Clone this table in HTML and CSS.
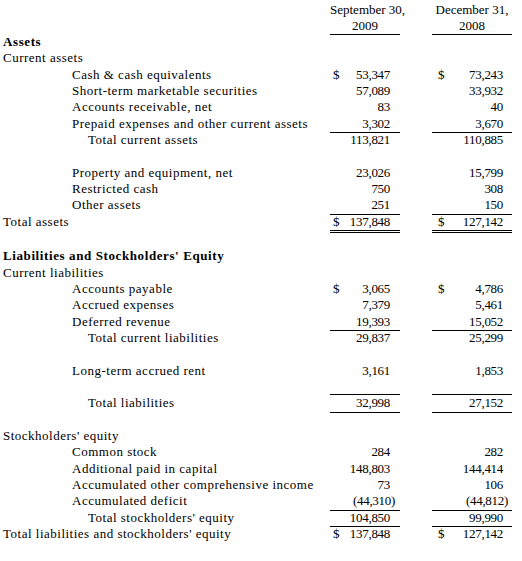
FILE: index.html
```html
<!DOCTYPE html>
<html lang="en">

<head>
    <meta charset="UTF-8">
    <title>Balance Sheet</title>
    <link rel="stylesheet" href="styles.css">
</head>

<body>
    <div class="sheet">
        <!-- Column headings -->
        <div class="row head">
            <span class="label"></span>
            <span class="col1 date">September 30,<br>2009</span>
            <span class="col2 date">December 31,<br>2008</span>
        </div>

        <!-- Assets -->
        <div class="row"><span class="label bold">Assets</span></div>
        <div class="row"><span class="label">Current assets</span></div>
        <div class="row">
            <span class="label l1">Cash &amp; cash equivalents</span>
            <span class="col1 amt"><span class="cur">$</span>53,347</span>
            <span class="col2 amt"><span class="cur">$</span>73,243</span>
        </div>
        <div class="row">
            <span class="label l1">Short-term marketable securities</span>
            <span class="col1 amt">57,089</span>
            <span class="col2 amt">33,932</span>
        </div>
        <div class="row">
            <span class="label l1">Accounts receivable, net</span>
            <span class="col1 amt">83</span>
            <span class="col2 amt">40</span>
        </div>
        <div class="row">
            <span class="label l1">Prepaid expenses and other current assets</span>
            <span class="col1 amt line">3,302</span>
            <span class="col2 amt line">3,670</span>
        </div>
        <div class="row">
            <span class="label l2">Total current assets</span>
            <span class="col1 amt">113,821</span>
            <span class="col2 amt">110,885</span>
        </div>
        <div class="row"></div>
        <div class="row">
            <span class="label l1">Property and equipment, net</span>
            <span class="col1 amt">23,026</span>
            <span class="col2 amt">15,799</span>
        </div>
        <div class="row">
            <span class="label l1">Restricted cash</span>
            <span class="col1 amt">750</span>
            <span class="col2 amt">308</span>
        </div>
        <div class="row">
            <span class="label l1">Other assets</span>
            <span class="col1 amt line">251</span>
            <span class="col2 amt line">150</span>
        </div>
        <div class="row">
            <span class="label">Total assets</span>
            <span class="col1 amt double"><span class="cur">$</span>137,848</span>
            <span class="col2 amt double"><span class="cur">$</span>127,142</span>
        </div>
        <div class="row after-double"></div>

        <!-- Liabilities -->
        <div class="row"><span class="label bold">Liabilities and Stockholders' Equity</span></div>
        <div class="row"><span class="label">Current liabilities</span></div>
        <div class="row">
            <span class="label l1">Accounts payable</span>
            <span class="col1 amt"><span class="cur">$</span>3,065</span>
            <span class="col2 amt"><span class="cur">$</span>4,786</span>
        </div>
        <div class="row">
            <span class="label l1">Accrued expenses</span>
            <span class="col1 amt">7,379</span>
            <span class="col2 amt">5,461</span>
        </div>
        <div class="row">
            <span class="label l1">Deferred revenue</span>
            <span class="col1 amt line">19,393</span>
            <span class="col2 amt line">15,052</span>
        </div>
        <div class="row">
            <span class="label l2">Total current liabilities</span>
            <span class="col1 amt">29,837</span>
            <span class="col2 amt">25,299</span>
        </div>
        <div class="row"></div>
        <div class="row">
            <span class="label l1">Long-term accrued rent</span>
            <span class="col1 amt">3,161</span>
            <span class="col2 amt">1,853</span>
        </div>
        <div class="row">
            <span class="label"></span>
            <span class="col1 amt line"></span>
            <span class="col2 amt line"></span>
        </div>
        <div class="row">
            <span class="label l2">Total liabilities</span>
            <span class="col1 amt line">32,998</span>
            <span class="col2 amt line">27,152</span>
        </div>
        <div class="row"></div>

        <!-- Equity -->
        <div class="row"><span class="label">Stockholders' equity</span></div>
        <div class="row">
            <span class="label l1">Common stock</span>
            <span class="col1 amt">284</span>
            <span class="col2 amt">282</span>
        </div>
        <div class="row">
            <span class="label l1">Additional paid in capital</span>
            <span class="col1 amt">148,803</span>
            <span class="col2 amt">144,414</span>
        </div>
        <div class="row">
            <span class="label l1">Accumulated other comprehensive income</span>
            <span class="col1 amt">73</span>
            <span class="col2 amt">106</span>
        </div>
        <div class="row">
            <span class="label l1">Accumulated deficit</span>
            <span class="col1 amt line neg">(44,310)</span>
            <span class="col2 amt line neg">(44,812)</span>
        </div>
        <div class="row">
            <span class="label l2">Total stockholders' equity</span>
            <span class="col1 amt line">104,850</span>
            <span class="col2 amt line">99,990</span>
        </div>
        <div class="row">
            <span class="label">Total liabilities and stockholders' equity</span>
            <span class="col1 amt double"><span class="cur">$</span>137,848</span>
            <span class="col2 amt double"><span class="cur">$</span>127,142</span>
        </div>
    </div>
</body>

</html>
```

FILE: styles.css
```css
body {
    margin: 0;
    background: #fff;
    color: #000;
    font-family: "Liberation Serif", "Times New Roman", serif;
    font-size: 13px;
}

.sheet {
    width: 522px;
}

.row {
    display: grid;
    grid-template-columns: 330px 70px 32px 80px;
    height: 16.33px;
    line-height: 16.33px;
}

.head {
    height: 32px;
    line-height: 16px;
    margin-top: 2px;
}

.label {
    grid-column: 1;
    padding-left: 3px;
    white-space: nowrap;
    letter-spacing: 0.5px;
}

.label.l1 {
    padding-left: 72px;
}

.label.l2 {
    padding-left: 88px;
}

.bold {
    font-weight: bold;
    letter-spacing: 0.6px;
}

.col1 {
    grid-column: 2;
}

.col2 {
    grid-column: 4;
}

.date {
    text-align: center;
    border-bottom: 1px solid #000;
    box-sizing: border-box;
    white-space: nowrap;
}

.amt {
    text-align: right;
    padding-right: 10px;
    box-sizing: border-box;
    letter-spacing: -0.3px;
}

.col2.amt {
    padding-right: 9px;
}

.cur {
    float: left;
    padding-left: 3px;
}

.col2 .cur {
    padding-left: 6px;
}

.amt.neg {
    padding-right: 5px;
}

.col2.amt.neg {
    padding-right: 4px;
}

.line {
    border-bottom: 1px solid #000;
}

.double {
    border-bottom: 3px double #000;
}

.after-double {
    height: 18.33px;
}
```
